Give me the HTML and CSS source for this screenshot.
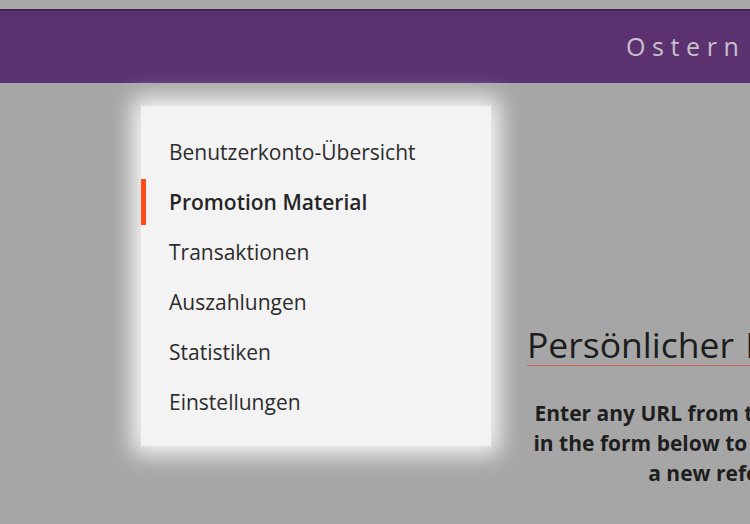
FILE: index.html
```html
<!DOCTYPE html>
<html lang="de">
<head>
<meta charset="utf-8">
<link rel="stylesheet" href="styles.css">
</head>
<body>
<div class="topgap"></div>
<header class="band">
  <div class="band-line"></div>
  <div class="band-inner"><span class="brand">Ostern</span></div>
</header>
<main class="page">
  <nav class="menu">
    <a class="item">Benutzerkonto-Übersicht</a>
    <a class="item active">Promotion Material</a>
    <a class="item">Transaktionen</a>
    <a class="item">Auszahlungen</a>
    <a class="item">Statistiken</a>
    <a class="item">Einstellungen</a>
  </nav>
  <section class="content">
    <h1 class="title">Persönlicher Referral-Link</h1>
    <p class="lead">Enter any URL from this website or shop<br>in the form below to generate and share<br>a new referral link</p>
  </section>
</main>
</body>
</html>
```
FILE: styles.css
```css
html, body {
  margin: 0;
  padding: 0;
}
body {
  width: 750px;
  height: 524px;
  overflow: hidden;
  background: #a6a6a6;
  font-family: "Open Sans", "Noto Sans", sans-serif;
}
.topgap {
  height: 9px;
  background: #a8a8a8;
}
.band {
  height: 74px;
  background: #5b3170;
  display: flex;
  flex-direction: column;
}
.band-line {
  height: 2px;
  background: #3f2252;
  box-shadow: 0 3px 3px rgba(70, 50, 110, 0.6);
}
.band-inner {
  flex: 1;
  display: flex;
  align-items: center;
  padding-left: 626px;
  padding-bottom: 2px;
}
.brand {
  color: #c7c1c9;
  font-size: 25px;
  letter-spacing: 6.6px;
  white-space: nowrap;
}
.page {
  display: flex;
  align-items: flex-start;
  padding-top: 23px;
  padding-left: 141px;
  width: 1100px;
}
.menu {
  width: 350px;
  height: 340px;
  box-sizing: border-box;
  background: #f3f3f3;
  box-shadow: 0 0 22px 8px rgba(255, 255, 255, 0.95);
  padding-top: 21px;
  display: flex;
  flex-direction: column;
}
.item {
  display: block;
  position: relative;
  height: 50px;
  line-height: 50px;
  padding-left: 28px;
  font-size: 21px;
  color: #2c2c2c;
}
.item.active {
  font-weight: 600;
  color: #262626;
}
.item.active::before {
  content: "";
  position: absolute;
  left: 0;
  top: 2px;
  width: 5px;
  height: 46px;
  background: #ff4c17;
}
.content {
  margin-left: 36px;
  padding-top: 218px;
  width: 436px;
}
.title {
  margin: 0;
  font-size: 35.5px;
  font-weight: 400;
  color: #1c1c1c;
  line-height: 40px;
  white-space: nowrap;
  word-spacing: 2px;
  border-bottom: 1px solid #c8685a;
  padding-bottom: 1px;
}
.lead {
  margin: 32px 0 0 0;
  font-size: 21px;
  font-weight: 700;
  color: #1e1e1e;
  line-height: 30px;
  text-align: center;
  white-space: nowrap;
}
```
